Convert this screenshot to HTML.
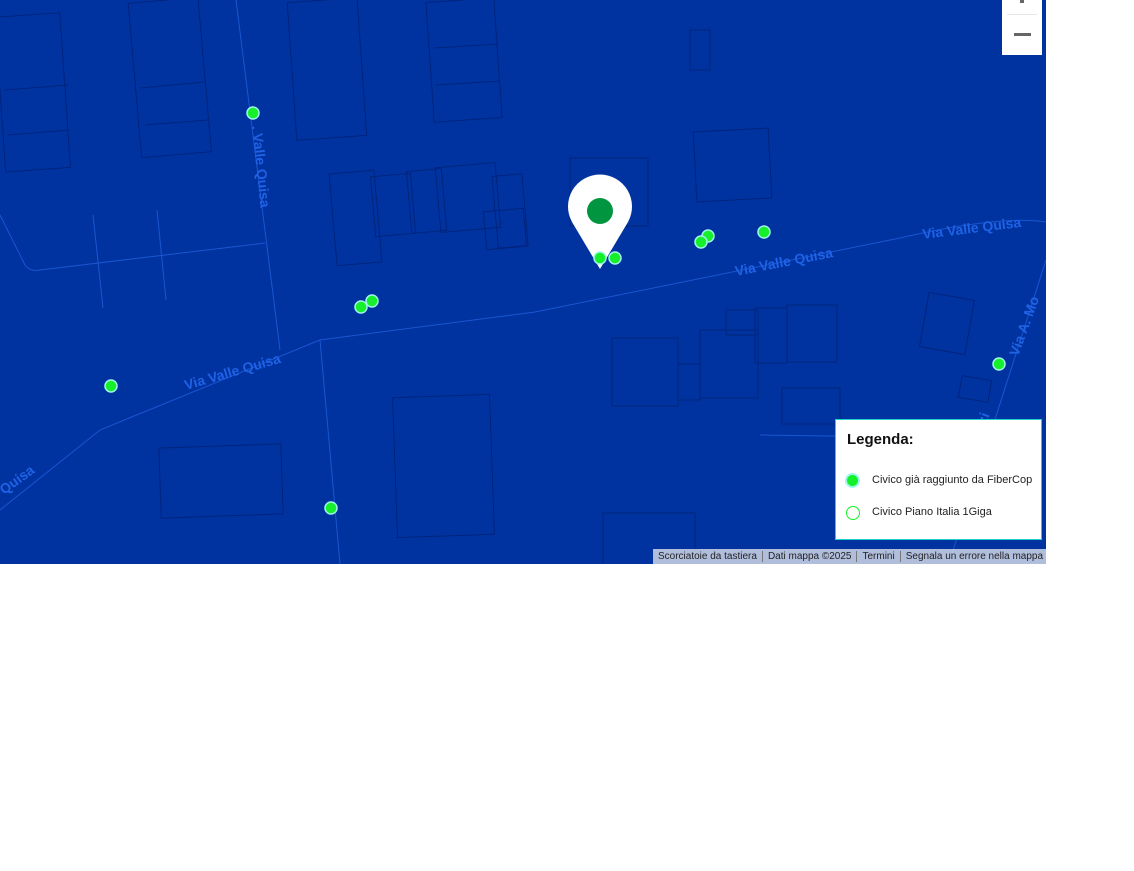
<!DOCTYPE html>
<html><head><meta charset="utf-8"><style>
html,body{margin:0;padding:0;background:#fff;width:1134px;height:871px;overflow:hidden;font-family:"Liberation Sans",sans-serif}
#map{position:absolute;left:0;top:0;width:1046px;height:564px;background:#0033a0;overflow:hidden}
.legend{position:absolute;left:835px;top:419px;width:207px;height:121px;background:#fff;border:1px solid #1fd4c8;box-sizing:border-box}
.legend h3{margin:0;position:absolute;left:11px;top:11px;font-size:15px;font-weight:bold;color:#111}
.li{position:absolute;left:12px;font-size:11px;color:#222}
.dot{position:absolute;left:-1px;width:11px;height:11px;border-radius:50%}
.attr{position:absolute;top:549px;height:15px;background:rgba(220,225,235,.8);font-size:10px;color:#222;line-height:15px}
.attr span{padding:0 5px;border-left:1px solid #777}
.zoom{position:absolute;left:1002px;top:0;width:40px;height:55px;background:#fff}
</style></head><body>
<div id="map">
<svg width="1046" height="564" style="position:absolute;left:0;top:0">
<g fill="none" stroke="#00247d" stroke-width="1">
<rect x="0" y="15" width="65" height="155" transform="rotate(-4 30 90)"/>
<path d="M5 90 L68 85 M8 135 L70 130"/>
<rect x="135" y="0" width="70" height="155" transform="rotate(-5 170 80)"/>
<path d="M140 88 L205 82 M145 125 L208 120"/>
<rect x="292" y="0" width="70" height="138" transform="rotate(-4 327 70)"/>
<rect x="430" y="0" width="68" height="120" transform="rotate(-4 464 60)"/>
<path d="M434 48 L498 44 M436 85 L500 81"/>
<rect x="690" y="30" width="20" height="40"/>
<rect x="695" y="130" width="75" height="70" transform="rotate(-3 732 165)"/>
<rect x="570" y="158" width="78" height="68"/>
<rect x="333" y="172" width="45" height="92" transform="rotate(-5 355 218)"/>
<rect x="373" y="175" width="40" height="60" transform="rotate(-5 393 205)"/>
<rect x="409" y="170" width="35" height="62" transform="rotate(-5 426 200)"/>
<rect x="438" y="165" width="60" height="65" transform="rotate(-5 468 198)"/>
<rect x="495" y="175" width="30" height="72" transform="rotate(-5 510 210)"/>
<rect x="485" y="210" width="40" height="38" transform="rotate(-5 505 229)"/>
<rect x="612" y="338" width="66" height="68"/>
<rect x="678" y="364" width="22" height="36"/>
<rect x="700" y="330" width="58" height="68"/>
<rect x="726" y="310" width="32" height="25"/>
<rect x="755" y="308" width="32" height="55"/>
<rect x="787" y="305" width="50" height="57"/>
<rect x="782" y="388" width="58" height="36"/>
<rect x="924" y="296" width="46" height="55" transform="rotate(10 947 323)"/>
<rect x="960" y="378" width="30" height="22" transform="rotate(10 975 389)"/>
<rect x="395" y="396" width="97" height="140" transform="rotate(-2 443 466)"/>
<rect x="160" y="446" width="122" height="70" transform="rotate(-2 221 481)"/>
<rect x="603" y="513" width="92" height="60"/>
</g>
<g fill="none" stroke="#1a55d0" stroke-width="1">
<path d="M0 215 L25 265 Q30 272 40 270 L265 243"/>
<path d="M236 0 L280 350"/>
<path d="M93 215 L103 308 M157 210 L166 300"/>
<path d="M320 340 L340 564"/>
<path d="M0 510 L100 430 L320 340 L535 312 L900 238 Q1000 215 1046 222"/>
<path d="M1046 260 L950 560"/>
<path d="M760 435 L890 437"/>
</g>
<g fill="#1f62e6" font-weight="bold" font-size="14" font-family="Liberation Sans,sans-serif">
<text transform="translate(186 390) rotate(-16)">Via Valle Quisa</text>
<text transform="translate(736 276) rotate(-11)">Via Valle Quisa</text>
<text transform="translate(923 239) rotate(-7)">Via Valle Quisa</text>
<text transform="translate(4 495) rotate(-36)">Quisa</text>
<text transform="translate(252 126) rotate(84)">. Valle Quisa</text>
<text transform="translate(1018 357) rotate(-70)">Via A. Mo</text>
<text transform="translate(986 425) rotate(-70)">zi</text>
</g>
<g fill="#16f02a" stroke="#9ff5e8" stroke-width="1.5">
<circle cx="253" cy="113" r="6"/><circle cx="372" cy="301" r="6"/><circle cx="361" cy="307" r="6"/>
<circle cx="111" cy="386" r="6"/><circle cx="331" cy="508" r="6"/><circle cx="708" cy="236" r="6"/>
<circle cx="701" cy="242" r="6"/><circle cx="764" cy="232" r="6"/><circle cx="999" cy="364" r="6"/>
</g>
<path d="M600 269 L572 222 A32 32 0 1 1 628 222 Z" fill="#fff"/>
<circle cx="600" cy="211" r="13" fill="#00953e"/>
<g fill="#16f02a" stroke="#9ff5e8" stroke-width="1.5">
<circle cx="600" cy="258" r="6"/><circle cx="615" cy="258" r="6"/>
</g>
</svg>
<div class="zoom"><div style="position:absolute;left:18px;top:0;width:4px;height:3px;background:#666"></div><div style="position:absolute;left:5px;top:14px;width:30px;height:1px;background:#e6e6e6"></div><div style="position:absolute;left:12px;top:33px;width:17px;height:3px;background:#666"></div></div>
<div class="legend"><h3>Legenda:</h3>
<div class="li" style="top:54px"><div class="dot" style="background:#16f02a;box-shadow:0 0 0 2px #9ff5e8;top:1px"></div><span style="position:absolute;left:24px;white-space:nowrap">Civico già raggiunto da FiberCop</span></div>
<div class="li" style="top:86px"><div class="dot" style="background:#fff;border:1.5px solid #16f02a;box-sizing:border-box;width:14px;height:14px;left:-2px;top:0"></div><span style="position:absolute;left:24px;white-space:nowrap">Civico Piano Italia 1Giga</span></div>
</div>
<div class="attr" style="left:653px;width:393px;white-space:nowrap;overflow:hidden"><span style="border:none">Scorciatoie da tastiera</span><span>Dati mappa ©2025</span><span>Termini</span><span>Segnala un errore nella mappa</span></div>
</div>
</body></html>
